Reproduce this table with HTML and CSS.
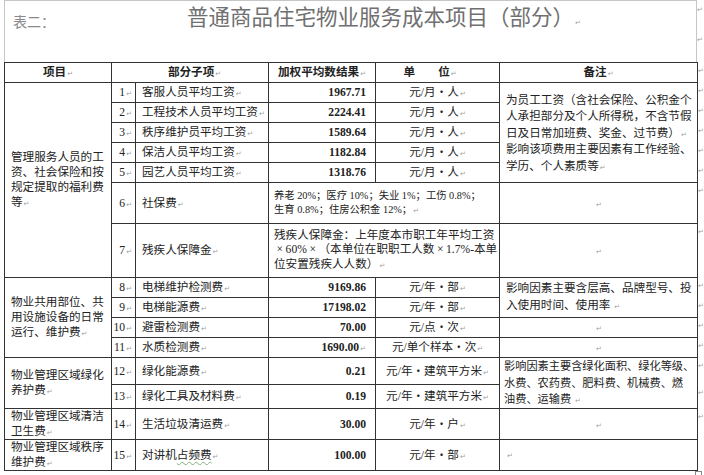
FILE: index.html
```html
<!DOCTYPE html>
<html lang="zh-CN">
<head>
<meta charset="utf-8">
<title>普通商品住宅物业服务成本项目（部分）</title>
<link rel="stylesheet" href="styles.css">
</head>
<body>
<div class="page">
  <div class="head">
    <div class="frame">
      <span class="label">表二：</span>
      <span class="title">普通商品住宅物业服务成本项目（部分）<span class="pm">↵</span></span>
    </div>
    <div class="side"><span class="pm">↵</span><span class="pm">↵</span></div>
  </div>
  <table class="cost">
    <colgroup>
      <col class="c1"><col class="c2"><col class="c3"><col class="c4"><col class="c5"><col class="c6"><col class="c7">
    </colgroup>
    <tr class="hd h20">
      <td>项目<span class="pm">↵</span></td>
      <td colspan="2" class="hsub">部分子项<span class="pm">↵</span></td>
      <td>加权平均数结果<span class="pm">↵</span></td>
      <td class="hunit">单　　位<span class="pm">↵</span></td>
      <td>备注<span class="pm">↵</span></td>
      <td class="rm"><span class="pm">↵</span></td>
    </tr>
    <tr class="h20">
      <td class="cat" rowspan="7">管理服务人员的工<br>资、社会保险和按<br>规定提取的福利费<br>等<span class="pm">↵</span></td>
      <td class="no">1<span class="pm">↵</span></td>
      <td class="item">客服人员平均工资<span class="pm">↵</span></td>
      <td class="val">1967.71</td>
      <td class="unit">元/月・人<span class="pm">↵</span></td>
      <td class="note note-a" rowspan="5">为员工工资（含社会保险、公积金个<br>人承担部分及个人所得税，不含节假<br>日及日常加班费、奖金、过节费）<span class="pm">↵</span><br>影响该项费用主要因素有工作经验、<br>学历、个人素质等<span class="pm">↵</span></td>
      <td class="rm"><span class="pm">↵</span></td>
    </tr>
    <tr class="h20">
      <td class="no">2<span class="pm">↵</span></td>
      <td class="item">工程技术人员平均工资<span class="pm">↵</span></td>
      <td class="val">2224.41</td>
      <td class="unit">元/月・人<span class="pm">↵</span></td>
      <td class="rm"><span class="pm">↵</span></td>
    </tr>
    <tr class="h20">
      <td class="no">3<span class="pm">↵</span></td>
      <td class="item">秩序维护员平均工资<span class="pm">↵</span></td>
      <td class="val">1589.64</td>
      <td class="unit">元/月・人<span class="pm">↵</span></td>
      <td class="rm"><span class="pm">↵</span></td>
    </tr>
    <tr class="h20">
      <td class="no">4<span class="pm">↵</span></td>
      <td class="item">保洁人员平均工资<span class="pm">↵</span></td>
      <td class="val">1182.84</td>
      <td class="unit">元/月・人<span class="pm">↵</span></td>
      <td class="rm"><span class="pm">↵</span></td>
    </tr>
    <tr class="h20">
      <td class="no">5<span class="pm">↵</span></td>
      <td class="item">园艺人员平均工资<span class="pm">↵</span></td>
      <td class="val">1318.76</td>
      <td class="unit">元/月・人<span class="pm">↵</span></td>
      <td class="rm"><span class="pm">↵</span></td>
    </tr>
    <tr class="h41">
      <td class="no">6<span class="pm">↵</span></td>
      <td class="item">社保费<span class="pm">↵</span></td>
      <td class="long small" colspan="2">养老 20%；医疗 10%；失业 1%；工伤 0.8%；<br>生育 0.8%；住房公积金 12%；<span class="pm">↵</span></td>
      <td class="empty"><span class="pm">↵</span></td>
      <td class="rm"><span class="pm">↵</span></td>
    </tr>
    <tr class="h54">
      <td class="no">7<span class="pm">↵</span></td>
      <td class="item">残疾人保障金<span class="pm">↵</span></td>
      <td class="long" colspan="2">残疾人保障金：上年度本市职工年平均工资<br><span class="fw">×</span>60%<span class="fw">×</span>（本单位在职职工人数<span class="fw">×</span>1.7%-本单<br>位安置残疾人人数）<span class="pm">↵</span></td>
      <td class="empty"><span class="pm">↵</span></td>
      <td class="rm"><span class="pm">↵</span></td>
    </tr>
    <tr class="h20">
      <td class="cat" rowspan="4">物业共用部位、共<br>用设施设备的日常<br>运行、维护费<span class="pm">↵</span></td>
      <td class="no">8<span class="pm">↵</span></td>
      <td class="item">电梯维护检测费<span class="pm">↵</span></td>
      <td class="val">9169.86</td>
      <td class="unit">元/年・部<span class="pm">↵</span></td>
      <td class="note" rowspan="2">影响因素主要含层高、品牌型号、投<br>入使用时间、使用率 <span class="pm">↵</span></td>
      <td class="rm"><span class="pm">↵</span></td>
    </tr>
    <tr class="h20">
      <td class="no">9<span class="pm">↵</span></td>
      <td class="item">电梯能源费<span class="pm">↵</span></td>
      <td class="val">17198.02</td>
      <td class="unit">元/年・部<span class="pm">↵</span></td>
      <td class="rm"><span class="pm">↵</span></td>
    </tr>
    <tr class="h20">
      <td class="no">10<span class="pm">↵</span></td>
      <td class="item">避雷检测费<span class="pm">↵</span></td>
      <td class="val">70.00</td>
      <td class="unit">元/点・次<span class="pm">↵</span></td>
      <td class="empty"><span class="pm">↵</span></td>
      <td class="rm"><span class="pm">↵</span></td>
    </tr>
    <tr class="h20">
      <td class="no">11<span class="pm">↵</span></td>
      <td class="item">水质检测费<span class="pm">↵</span></td>
      <td class="val">1690.00<span class="pm">↵</span></td>
      <td class="unit">元/单个样本・次<span class="pm">↵</span></td>
      <td class="empty"><span class="pm">↵</span></td>
      <td class="rm"><span class="pm">↵</span></td>
    </tr>
    <tr class="h27">
      <td class="cat" rowspan="2">物业管理区域绿化<br>养护费<span class="pm">↵</span></td>
      <td class="no">12<span class="pm">↵</span></td>
      <td class="item">绿化能源费<span class="pm">↵</span></td>
      <td class="val">0.21</td>
      <td class="unit">元/年・建筑平方米<span class="pm">↵</span></td>
      <td class="note note-c" rowspan="2">影响因素主要含绿化面积、绿化等级、<br>水费、农药费、肥料费、机械费、燃<br>油费、运输费 <span class="pm">↵</span></td>
      <td class="rm"><span class="pm">↵</span></td>
    </tr>
    <tr class="h24">
      <td class="no">13<span class="pm">↵</span></td>
      <td class="item">绿化工具及材料费<span class="pm">↵</span></td>
      <td class="val">0.19</td>
      <td class="unit">元/年・建筑平方米<span class="pm">↵</span></td>
      <td class="rm"><span class="pm">↵</span></td>
    </tr>
    <tr class="h31">
      <td class="cat">物业管理区域清洁<br>卫生费<span class="pm">↵</span></td>
      <td class="no">14<span class="pm">↵</span></td>
      <td class="item">生活垃圾清运费<span class="pm">↵</span></td>
      <td class="val">30.00</td>
      <td class="unit">元/年・户<span class="pm">↵</span></td>
      <td class="empty"><span class="pm">↵</span></td>
      <td class="rm"><span class="pm">↵</span></td>
    </tr>
    <tr class="h31">
      <td class="cat">物业管理区域秩序<br>维护费<span class="pm">↵</span></td>
      <td class="no">15<span class="pm">↵</span></td>
      <td class="item">对讲机<span class="wavy">占频费</span><span class="pm">↵</span></td>
      <td class="val">100.00</td>
      <td class="unit">元/年・部<span class="pm">↵</span></td>
      <td class="note"><span class="pm">↵</span></td>
      <td class="rm"></td>
    </tr>
  </table>
  <div class="handle"></div>
</div>
</body>
</html>
```

FILE: styles.css
```css
html, body {
  margin: 0;
  padding: 0;
  background: #ffffff;
}

body {
  font-family: "Liberation Serif", "Noto Sans CJK SC", serif;
  color: #222222;
}

.page {
  width: 704px;
  height: 475px;
  overflow: hidden;
}

.head {
  display: flex;
}

.frame {
  width: 693px;
  height: 62px;
  margin-left: 4px;
  box-sizing: border-box;
  border: 1px solid #c6c6c6;
  border-bottom: none;
  display: flex;
  align-items: flex-start;
  padding: 4px 0 0 8px;
}

.label {
  width: 174px;
  flex: none;
  font-family: "Noto Sans CJK SC", sans-serif;
  font-size: 14px;
  line-height: 14px;
  margin-top: 9px;
  color: #8a8a8a;
}

.title {
  font-family: "Noto Sans CJK SC", sans-serif;
  font-size: 21.5px;
  line-height: 22px;
  color: #707070;
  white-space: nowrap;
}

.side {
  width: 7px;
  display: flex;
  flex-direction: column;
  padding-top: 6px;
  gap: 22px;
}

.pm {
  font-family: "DejaVu Sans", sans-serif;
  font-size: 7px;
  line-height: 8px;
  color: #a0a0a0;
  font-weight: normal;
  margin-left: 1px;
}

.side .pm {
  margin-left: 0;
}

.cost {
  border-collapse: collapse;
  table-layout: fixed;
  width: 700px;
  margin-left: 4px;
  font-size: 11.6px;
}

.c1 { width: 107px; }
.c2 { width: 24px; }
.c3 { width: 133px; }
.c4 { width: 107px; }
.c5 { width: 124px; }
.c6 { width: 198px; }
.c7 { width: 7px; }

.cost td {
  border: 1px solid #333333;
  padding: 0 5px;
  line-height: 13px;
  vertical-align: middle;
  white-space: nowrap;
  overflow: hidden;
}

.cost td.rm {
  border: none;
  padding: 3px 0 0 0;
  vertical-align: top;
  line-height: 8px;
}

.cost td.rm .pm {
  margin-left: 0;
}

.h20 { height: 20px; }
.h24 { height: 24px; }
.h27 { height: 27px; }
.h31 { height: 31px; }
.h41 { height: 41px; }
.h54 { height: 54px; }

.hd td {
  font-weight: bold;
  text-align: center;
}

.hd td.hsub {
  padding-left: 14px;
}

.hd td.hunit {
  padding-right: 20px;
}

.cost td.cat {
  line-height: 15px;
  padding-left: 6px;
}

.cost td.no {
  text-align: right;
  padding: 0 3px 0 0;
}

.cost td.item {
  padding-left: 6px;
}

.cost td.val {
  text-align: right;
  font-weight: bold;
  padding-right: 9px;
}

.cost td.unit {
  text-align: center;
  padding: 0 2px;
}

.cost td.note {
  line-height: 16.5px;
  padding-left: 6px;
}

.cost td.note-a {
  padding-top: 3px;
}

.cost td.note-c {
  font-size: 11.2px;
  line-height: 16.5px;
  padding-left: 4px;
}

.cost td.long {
  line-height: 14.5px;
  padding-left: 5px;
}

.cost td.small {
  font-size: 10.3px;
  line-height: 14px;
}

.fw {
  display: inline-block;
  width: 1em;
  text-align: center;
}

.cost td.empty {
  text-align: center;
}

.wavy {
  text-decoration: underline wavy #7fb07f;
  text-decoration-thickness: 1px;
  text-underline-offset: 2px;
}

.handle {
  width: 5px;
  height: 5px;
  border: 1px solid #888888;
  margin: 0 0 0 695px;
}
```
